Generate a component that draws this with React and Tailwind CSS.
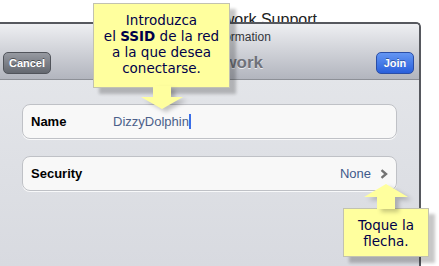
import React from "react";

const ui = { fontFamily: '"Liberation Sans", Arial, sans-serif' };
const tip = { fontFamily: '"DejaVu Sans", Verdana, sans-serif' };

const Row = ({ label, children }) => (
  <div className="w-[375px] h-[35px] flex items-center pl-[8px] pr-[8px] rounded-[8px] bg-[#f8f8f8] border border-[#bfc1c6] shadow-[0_1px_0_rgba(255,255,255,0.8)]">
    <span className="w-[82px] text-[13px] font-bold text-black">{label}</span>
    {children}
  </div>
);

export default function App() {
  return (
    <div className="relative w-[439px] h-[266px] overflow-hidden bg-white" style={ui}>
      {/* page text peeking out above the dialog */}
      <div className="h-[22px] overflow-hidden">
        <div className="pl-[132px] pt-[12px] text-[16px] leading-[16px] text-[#222]">
          Wireless Network Support
        </div>
      </div>

      <div className="flex h-[244px]">
        {/* dialog */}
        <div className="w-[421px] flex flex-col border-t-2 border-r-2 border-[#56585e] rounded-tr-[5px] overflow-hidden">
          {/* header */}
          <div className="h-[56px] flex flex-col bg-linear-to-b from-[#eeeff2] to-[#b2b5be] border-b border-[#8d9097]">
            <div className="h-[26px] flex items-center justify-center pr-[14px] text-[12px] text-[#34363b]">
              Enter network information
            </div>
            <div className="h-[22px] mt-[2px] flex items-center pl-[3px] pr-[5px]">
              <button className="w-[48px] h-[22px] rounded-[5px] border border-[#51545b] bg-linear-to-b from-[#979aa1] to-[#646870] text-white text-[11px] font-bold [text-shadow:0_-1px_0_rgba(0,0,0,0.45)]">
                Cancel
              </button>
              <div className="flex-1 text-center pr-[18px] text-[17px] font-bold text-[#6f727a] [text-shadow:0_1px_0_rgba(255,255,255,0.7)]">
                Other Network
              </div>
              <button className="w-[38px] h-[22px] rounded-[5px] border border-[#2a4ea6] bg-linear-to-b from-[#6496f3] to-[#2a5fdb] text-white text-[11px] font-bold [text-shadow:0_-1px_0_rgba(0,0,0,0.35)]">
                Join
              </button>
            </div>
          </div>

          {/* body */}
          <div className="flex-1 flex flex-col gap-[17px] pt-[24px] pl-[22px] bg-linear-to-b from-[#e3e5e9] to-[#d8dae0]">
            <Row label="Name">
              <span className="text-[13px] text-[#4b5f8a]">DizzyDolphin</span>
              <span className="w-[2px] h-[15px] bg-[#3a6ee8]" />
            </Row>
            <Row label="Security">
              <span className="flex-1" />
              <span className="text-[13px] text-[#3e5a8b]">None</span>
              <svg width="8" height="10" viewBox="0 0 8 10" className="ml-[9px]">
                <path d="M1.5 1.2 L6 5 L1.5 8.8" fill="none" stroke="#737373" strokeWidth="2.4" />
              </svg>
            </Row>
          </div>
        </div>
        <div className="flex-1 bg-white" />
      </div>

      {/* callout: SSID */}
      <div
        className="absolute left-[93px] top-[3px] w-[137px] h-[85px] pt-[8px] bg-[#ffff9e] border border-[#c2c2b0] shadow-[6px_6px_3px_rgba(0,0,0,0.22)] text-center text-[13.5px] leading-[16px] text-[#00004a]"
        style={tip}
      >
        Introduzca
        <br />
        el <b>SSID</b> de la red
        <br />
        a la que desea
        <br />
        conectarse.
      </div>
      <svg
        width="44"
        height="24"
        viewBox="0 0 44 24"
        className="absolute left-[140px] top-[86px] drop-shadow-[4px_3px_2px_rgba(0,0,0,0.22)]"
      >
        <polygon points="13,0 31,0 31,11 43,11 22,23 1,11 13,11" fill="#ffff9e" />
      </svg>

      {/* callout: arrow */}
      <div
        className="absolute left-[343px] top-[208px] w-[86px] h-[49px] pt-[8px] bg-[#ffff9e] border border-[#c2c2b0] shadow-[6px_6px_3px_rgba(0,0,0,0.22)] text-center text-[13.5px] leading-[16px] text-[#00004a]"
        style={tip}
      >
        Toque la
        <br />
        flecha.
      </div>
      <svg
        width="46"
        height="27"
        viewBox="0 0 46 27"
        className="absolute left-[363px] top-[183px] drop-shadow-[4px_3px_2px_rgba(0,0,0,0.22)]"
      >
        <polygon points="23,1 45,14 32,14 32,26 14,26 14,14 1,14" fill="#ffff9e" />
      </svg>
    </div>
  );
}
